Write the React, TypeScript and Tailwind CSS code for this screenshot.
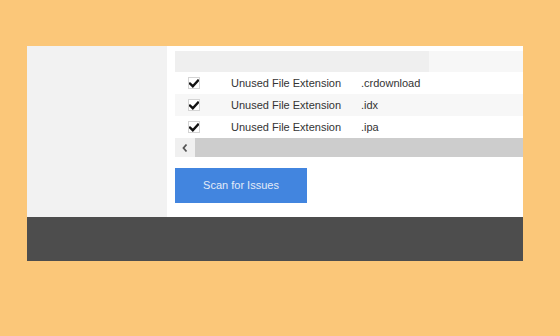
import React from "react";

const rows = [
  { name: "Unused File Extension", ext: ".crdownload" },
  { name: "Unused File Extension", ext: ".idx" },
  { name: "Unused File Extension", ext: ".ipa" },
];

const Check = () => (
  <span className="flex h-[12px] w-[12px] items-center justify-center border border-[#d4d4d4] bg-white">
    <svg width="10" height="9" viewBox="0 0 10 9">
      <path d="M1 4.6 L3.8 7.2 L9 1.6" fill="none" stroke="#111" strokeWidth="2.4" strokeLinecap="square" />
    </svg>
  </span>
);

export default function App() {
  return (
    <div
      className="h-[336px] w-[560px] bg-[#fbc779] pt-[46px] pl-[27px]"
      style={{ fontFamily: "'Liberation Sans', Arial, sans-serif" }}
    >
      <div className="flex h-[215px] w-[496px] flex-col">
        <div className="flex flex-1">
          <div className="w-[140px] bg-[#f2f2f2]" />
          <div className="flex flex-1 flex-col bg-white pl-[8px] pt-[5px]">
            <div className="flex h-[21px] bg-[#f7f7f7]">
              <div className="w-[254px] bg-[#efefef]" />
            </div>
            {rows.map((r, i) => (
              <div
                key={r.ext}
                className={`flex h-[22px] items-center text-[11px] text-[#333] ${i === 1 ? "bg-[#f7f7f7]" : "bg-white"}`}
              >
                <div className="flex w-[56px] pl-[13px]">
                  <Check />
                </div>
                <div className="w-[130px]">{r.name}</div>
                <div>{r.ext}</div>
              </div>
            ))}
            <div className="flex h-[19px]">
              <div className="flex w-[20px] items-center justify-center bg-[#f0f0f0]">
                <svg width="8" height="10" viewBox="0 0 8 10">
                  <path d="M5.5 1.5 L2.5 5 L5.5 8.5" fill="none" stroke="#555" strokeWidth="1.8" />
                </svg>
              </div>
              <div className="flex-1 bg-[#cdcdcd]" />
            </div>
            <div className="pt-[11px]">
              <button className="h-[35px] w-[132px] bg-[#4285df] text-[11px] text-[#e3ebf8]">
                Scan for Issues
              </button>
            </div>
          </div>
        </div>
        <div className="h-[44px] bg-[#4d4d4d]" />
      </div>
    </div>
  );
}
